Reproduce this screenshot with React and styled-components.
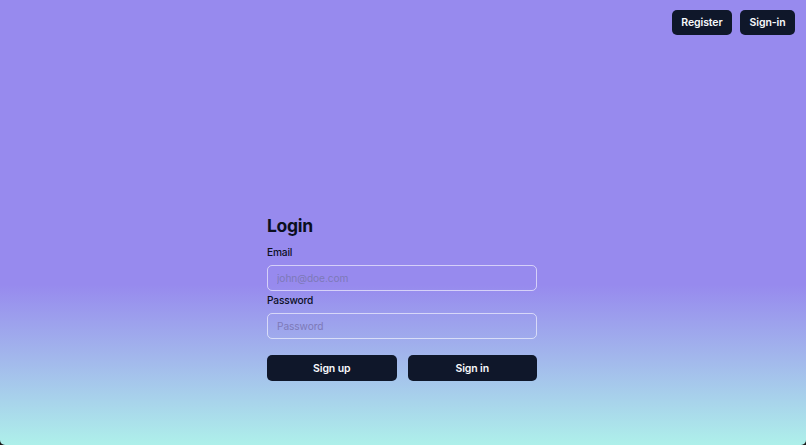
import React from "react";
import styled, { createGlobalStyle } from "styled-components";

const GlobalStyle = createGlobalStyle`
  html, body { margin: 0; padding: 0; background: #1a1a1a; }
  body { font-family: Inter, "Noto Sans", sans-serif; }
  * { box-sizing: border-box; }
`;

const Page = styled.div`
  width: 806px;
  height: 445px;
  display: flex;
  flex-direction: column;
  background: linear-gradient(to bottom, #978aee 0%, #978aee 64%, #a2b6ec 80%, #aef0ea 100%);
  border-radius: 0 0 5px 5px;
  overflow: hidden;
`;

const TopBar = styled.nav`
  display: flex;
  justify-content: flex-end;
  gap: 8px;
  padding: 10px 11px 0 0;
`;

const DarkButton = styled.button`
  height: ${p => (p.$tall ? 26 : 25)}px;
  padding: 0 ${p => (p.$tall ? 10 : 9.5)}px;
  border: none;
  border-radius: 5px;
  background: #0f172a;
  color: #f8fafc;
  font-family: Inter, "Noto Sans", sans-serif;
  font-size: 10.5px;
  font-weight: 600;
  letter-spacing: -0.1px;
  cursor: pointer;
`;

const FormWrap = styled.div`
  display: flex;
  justify-content: center;
  padding: 177px 2px 0 0;
`;

const Form = styled.form`
  width: 270px;
  display: flex;
  flex-direction: column;
`;

const Title = styled.h1`
  margin: 0 0 3px;
  font-size: 17.5px;
  line-height: 28px;
  font-weight: 700;
  letter-spacing: -0.3px;
  color: #0b0f1e;
`;

const Label = styled.label`
  font-size: 10.2px;
  line-height: 18px;
  font-weight: 500;
  letter-spacing: -0.2px;
  color: #0b0f1e;
  margin-bottom: 4px;
`;

const Input = styled.input`
  height: 26px;
  width: 100%;
  padding: 0 9px;
  border: 1px solid rgba(255, 255, 255, 0.6);
  border-radius: 5px;
  background: transparent;
  font-family: Inter, "Noto Sans", sans-serif;
  font-size: 10.2px;
  letter-spacing: -0.1px;
  color: #0b0f1e;
  outline: none;
  &::placeholder { color: #7d79b8; opacity: 1; }
`;

const Buttons = styled.div`
  display: grid;
  grid-template-columns: 1fr 1fr;
  gap: 11px;
  margin-top: 16px;
`;

export default function App() {
  return (
    <>
      <GlobalStyle />
      <Page>
        <TopBar>
          <DarkButton>Register</DarkButton>
          <DarkButton>Sign-in</DarkButton>
        </TopBar>
        <FormWrap>
          <Form onSubmit={e => e.preventDefault()}>
            <Title>Login</Title>
            <Label>Email</Label>
            <Input type="email" placeholder="john@doe.com" />
            <Label>Password</Label>
            <Input type="password" placeholder="Password" />
            <Buttons>
              <DarkButton $tall type="button">Sign up</DarkButton>
              <DarkButton $tall type="submit">Sign in</DarkButton>
            </Buttons>
          </Form>
        </FormWrap>
      </Page>
    </>
  );
}
